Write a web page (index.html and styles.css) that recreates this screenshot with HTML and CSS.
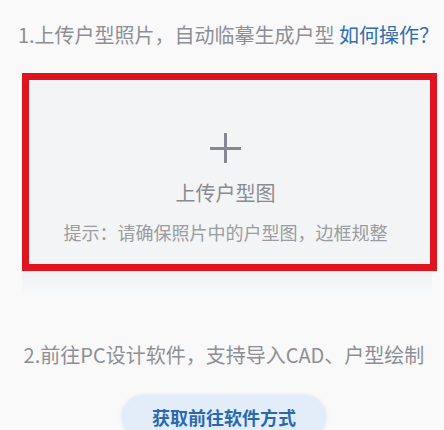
FILE: index.html
```html
<!DOCTYPE html>
<html lang="zh">
<head>
<meta charset="utf-8">
<link rel="stylesheet" href="styles.css">
</head>
<body>
<div class="page">
  <p class="step step1">1.上传户型照片，自动临摹生成户型 <a class="link">如何操作？</a></p>
  <div class="card">
    <div class="upload">
      <svg class="plus" width="31" height="30" viewBox="0 0 31 30"><path d="M0 15.5H31M15.5 0V30" stroke="#868991" stroke-width="3"/></svg>
      <div class="label">上传户型图</div>
      <div class="hint">提示：请确保照片中的户型图，边框规整</div>
    </div>
    <div class="tail"></div>
  </div>
  <p class="step step2">2.前往PC设计软件，支持导入CAD、户型绘制</p>
  <div class="btn-row"><div class="btn">获取前往软件方式</div></div>
</div>
</body>
</html>
```
FILE: styles.css
```css
html, body {
  margin: 0;
  padding: 0;
  background: #f9f9fa;
  height: 100%;
  overflow: hidden;
}
.page {
  padding-top: 21px;
  font-family: "Noto Sans CJK SC", "Noto Sans", sans-serif;
}
.step {
  margin: 0;
  text-align: center;
  font-size: 20px;
  line-height: 28px;
  color: #8c8f95;
}
.step1 {
  padding-left: 13px;
}
.link {
  color: #2f6fae;
}
.card {
  margin: 24px 7px 0 22px;
}
.upload {
  box-sizing: border-box;
  height: 198px;
  border: 7px solid #e0141e;
  background: #f3f4f6;
  display: flex;
  flex-direction: column;
  align-items: center;
  padding-top: 53px;
  padding-right: 8px;
}
.plus {
  display: block;
}
.label {
  margin-top: 16px;
  font-size: 20px;
  line-height: 28px;
  color: #8a8b8e;
}
.hint {
  margin-top: 12px;
  font-size: 18px;
  line-height: 26px;
  color: #9a9ca0;
}
.tail {
  height: 22px;
  margin-right: 5px;
  background: linear-gradient(#eff0f2, #f7f8f9);
}
.step2 {
  margin-top: 48px;
  padding-left: 4px;
}
.btn-row {
  display: flex;
  justify-content: center;
  margin-top: 26px;
  padding-left: 4px;
}
.btn {
  width: 204px;
  height: 44px;
  border-radius: 22px;
  background: #e2edf9;
  box-shadow: 0 0 4px rgba(200, 215, 235, 0.6);
  color: #2a69ad;
  font-size: 18px;
  font-weight: bold;
  line-height: 44px;
  text-align: center;
}
```
